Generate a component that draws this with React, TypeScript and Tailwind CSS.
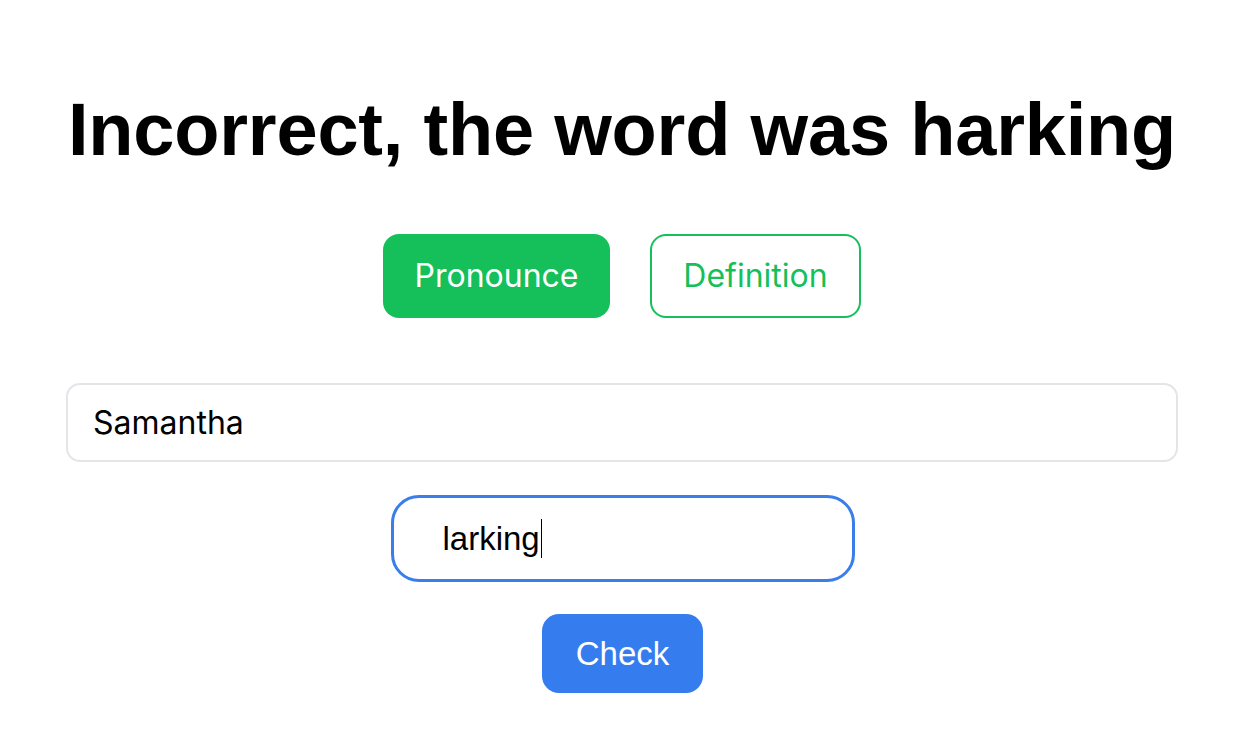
export default function App() {
  return (
    <div className="min-h-screen bg-white">
      <div className="ml-[66px] w-[1112px] pt-[93px] flex flex-col items-center">
        {/* Result heading */}
        <h1 className="text-[74px] leading-none font-bold text-black whitespace-nowrap tracking-[-0.2px]" style={{ fontFamily: '"Liberation Sans", Arial, sans-serif' }}>
          Incorrect, the word was harking
        </h1>

        {/* Actions */}
        <div className="mt-[67px] flex items-center gap-[40px]" style={{ fontFamily: 'Inter, sans-serif' }}>
          <button className="h-[84px] w-[227px] rounded-[16px] bg-[#15c05b] text-white text-[32px] flex items-center justify-center">
            Pronounce
          </button>
          <button className="h-[84px] w-[211px] rounded-[16px] border-2 border-[#15c05b] bg-white text-[#15c05b] text-[32px] flex items-center justify-center">
            Definition
          </button>
        </div>

        {/* Name */}
        <div className="mt-[65px] w-full h-[79px] rounded-[14px] border-2 border-[#e3e5e8] flex items-center px-[25px] text-[32px] text-black" style={{ fontFamily: 'Inter, sans-serif' }}>
          Samantha
        </div>

        {/* Guess */}
        <div className="mt-[33px] ml-[1px] w-[464px] h-[87px] rounded-[28px] border-[3px] border-[#3a7ee9] flex items-center pl-[49px] text-[33px] text-black" style={{ fontFamily: '"Liberation Sans", Arial, sans-serif' }}>
          <span>larking</span>
          <span className="ml-[1px] w-px h-[39px] bg-black" />
        </div>

        <button className="mt-[32px] ml-[1px] w-[161px] h-[79px] rounded-[17px] bg-[#357dee] text-white text-[33px] flex items-center justify-center" style={{ fontFamily: '"Liberation Sans", Arial, sans-serif' }}>
          Check
        </button>
      </div>
    </div>
  );
}
